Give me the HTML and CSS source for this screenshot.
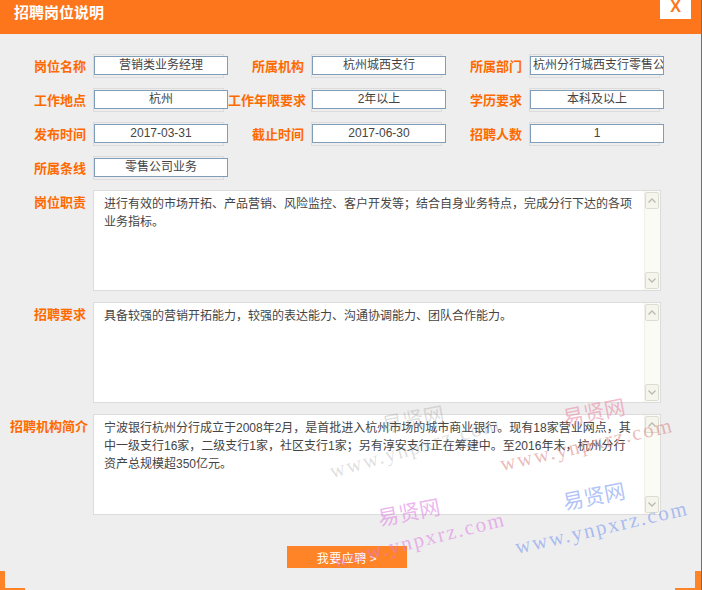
FILE: index.html
```html
<!DOCTYPE html>
<html lang="zh-CN">
<head>
<meta charset="utf-8">
<title>招聘岗位说明</title>
<link rel="stylesheet" href="styles.css">
</head>
<body>
<div class="dialog">
  <div class="header">
    <h1 class="title">招聘岗位说明</h1>
    <a class="close">X</a>
  </div>
  <div class="form">
    <div class="row">
      <div class="field"><span class="label">岗位名称</span><div class="cell"><div class="box">营销类业务经理</div></div></div>
      <div class="field"><span class="label">所属机构</span><div class="cell"><div class="box">杭州城西支行</div></div></div>
      <div class="field"><span class="label">所属部门</span><div class="cell"><div class="box box-left">杭州分行城西支行零售公司业务部</div></div></div>
    </div>
    <div class="row">
      <div class="field"><span class="label">工作地点</span><div class="cell"><div class="box">杭州</div></div></div>
      <div class="field"><span class="label">工作年限要求</span><div class="cell"><div class="box">2年以上</div></div></div>
      <div class="field"><span class="label">学历要求</span><div class="cell"><div class="box">本科及以上</div></div></div>
    </div>
    <div class="row">
      <div class="field"><span class="label">发布时间</span><div class="cell"><div class="box">2017-03-31</div></div></div>
      <div class="field"><span class="label">截止时间</span><div class="cell"><div class="box">2017-06-30</div></div></div>
      <div class="field"><span class="label">招聘人数</span><div class="cell"><div class="box">1</div></div></div>
    </div>
    <div class="row">
      <div class="field"><span class="label">所属条线</span><div class="cell"><div class="box">零售公司业务</div></div></div>
    </div>
    <div class="area-row">
      <span class="label">岗位职责</span>
      <div class="area">
        <div class="area-text">进行有效的市场开拓、产品营销、风险监控、客户开发等；结合自身业务特点，完成分行下达的各项<br>业务指标。</div>
        <div class="scroll">
          <span class="sbtn"><svg width="8" height="5" viewBox="0 0 8 5"><polyline points="0.5,4.5 4,1 7.5,4.5" fill="none" stroke="#b9b9b0" stroke-width="1.3"/></svg></span>
          <span class="sbtn"><svg width="8" height="5" viewBox="0 0 8 5"><polyline points="0.5,0.5 4,4 7.5,0.5" fill="none" stroke="#b9b9b0" stroke-width="1.3"/></svg></span>
        </div>
      </div>
    </div>
    <div class="area-row">
      <span class="label">招聘要求</span>
      <div class="area">
        <div class="area-text">具备较强的营销开拓能力，较强的表达能力、沟通协调能力、团队合作能力。</div>
        <div class="scroll">
          <span class="sbtn"><svg width="8" height="5" viewBox="0 0 8 5"><polyline points="0.5,4.5 4,1 7.5,4.5" fill="none" stroke="#b9b9b0" stroke-width="1.3"/></svg></span>
          <span class="sbtn"><svg width="8" height="5" viewBox="0 0 8 5"><polyline points="0.5,0.5 4,4 7.5,0.5" fill="none" stroke="#b9b9b0" stroke-width="1.3"/></svg></span>
        </div>
      </div>
    </div>
    <div class="area-row">
      <span class="label">招聘机构简介</span>
      <div class="area">
        <div class="area-text">宁波银行杭州分行成立于2008年2月，是首批进入杭州市场的城市商业银行。现有18家营业网点，其<br>中一级支行16家，二级支行1家，社区支行1家；另有淳安支行正在筹建中。至2016年末，杭州分行<br>资产总规模超350亿元。</div>
        <div class="scroll">
          <span class="sbtn"><svg width="8" height="5" viewBox="0 0 8 5"><polyline points="0.5,4.5 4,1 7.5,4.5" fill="none" stroke="#b9b9b0" stroke-width="1.3"/></svg></span>
          <span class="sbtn"><svg width="8" height="5" viewBox="0 0 8 5"><polyline points="0.5,0.5 4,4 7.5,0.5" fill="none" stroke="#b9b9b0" stroke-width="1.3"/></svg></span>
        </div>
      </div>
    </div>
  </div>
  <div class="actions">
    <button class="apply">我要应聘 &gt;</button>
  </div>
  <span class="corner corner-left"></span>
  <span class="corner corner-right"></span>

  <span class="wm wm-cn wm-pink wm1">易贤网</span>
  <span class="wm wm-url wm-rose wm2">www.ynpxrz.com</span>
  <span class="wm wm-url wm-gray wm3">www.ynpxrz.com</span>
  <span class="wm wm-cn wm-gray wm3b">易贤网</span>
  <span class="wm wm-cn wm-magenta wm4">易贤网</span>
  <span class="wm wm-cn wm-blue wm5">易贤网</span>
  <span class="wm wm-url wm-blue wm6">www.ynpxrz.com</span>
  <span class="wm wm-url wm-magenta wm7">www.ynpxrz.com</span>
</div>
</body>
</html>
```
FILE: styles.css
```css
body {
  margin: 0;
  background: #eeeeee;
}

.dialog {
  position: relative;
  width: 701px;
  height: 590px;
  background: #eeeeee;
  border-right: 1px solid #707070;
  overflow: hidden;
  font-family: "Liberation Sans", "Noto Sans CJK SC", sans-serif;
  font-size: 12px;
  color: #444444;
}

.header {
  position: relative;
  height: 34px;
  background: #fd761b;
}

.title {
  margin: 0;
  padding-left: 14px;
  line-height: 24px;
  font-family: "Noto Sans CJK SC", sans-serif;
  font-size: 15px;
  font-weight: bold;
  color: #ffffff;
}

.close {
  position: absolute;
  top: 0;
  right: 10px;
  width: 31px;
  height: 19px;
  background: #ffffff;
  color: #fd761b;
  font: bold 16px/13px "Liberation Sans", sans-serif;
  text-align: center;
}

.form {
  display: flex;
  flex-direction: column;
  gap: 10px;
  padding: 20px 0 0 10px;
}

.row {
  display: flex;
  align-items: center;
  height: 24px;
}

.field {
  display: flex;
  align-items: center;
}

.label {
  flex: none;
  width: 76px;
  margin-right: 7px;
  text-align: right;
  white-space: nowrap;
  color: #ff6a00;
  font-family: "Noto Sans CJK SC", sans-serif;
  font-weight: bold;
  font-size: 13px;
  line-height: 18px;
}

.cell {
  box-sizing: border-box;
  width: 131px;
  height: 24px;
  margin-right: 4px;
  padding-top: 1px;
  border: 1px solid #dcdcdc;
}

.box {
  box-sizing: border-box;
  width: 134px;
  height: 19px;
  border: 1px solid #7f9db9;
  background: #ffffff;
  text-align: center;
  line-height: 17px;
  white-space: nowrap;
  overflow: hidden;
}

.box-left {
  text-align: left;
  padding-left: 2px;
}

.area-row {
  display: flex;
  align-items: flex-start;
}

.area-row + .area-row {
  margin-top: 1px;
}

.area-row .label {
  padding-top: 3px;
}

.area {
  box-sizing: border-box;
  display: flex;
  width: 568px;
  height: 101px;
  border: 1px solid #dcdcdc;
  background: #ffffff;
}

.area-text {
  flex: 1;
  padding: 4px 6px 0 10px;
  line-height: 18px;
  white-space: nowrap;
  overflow: hidden;
}

.scroll {
  box-sizing: border-box;
  display: flex;
  flex-direction: column;
  justify-content: space-between;
  width: 16px;
  padding: 1px 0;
  background: #fbfbf6;
  border-left: 1px solid #f0f0e6;
}

.sbtn {
  display: flex;
  align-items: center;
  justify-content: center;
  height: 15px;
  margin: 0 1px 0 0;
  border: 1px solid #dcdcd0;
  border-radius: 2px;
  background: #f5f5ee;
}

.actions {
  display: flex;
  justify-content: center;
  margin-top: 31px;
  padding-right: 7px;
}

.apply {
  width: 120px;
  height: 22px;
  padding: 0;
  border: 0;
  background: #ff8427;
  color: #ffffff;
  font-family: "Noto Sans CJK SC", sans-serif;
  font-size: 12px;
  letter-spacing: 0.5px;
}

.corner {
  position: absolute;
  bottom: 0;
  width: 20px;
  height: 17px;
  border-bottom: 2px solid #ff8427;
}

.corner-left {
  left: 0;
  border-left: 5px solid #ff8427;
}

.corner-right {
  right: 0;
  border-right: 6px solid #ff8427;
}

/* watermark overlay */
.wm {
  position: absolute;
  line-height: 22px;
  white-space: nowrap;
  transform-origin: left bottom;
  pointer-events: none;
}

.wm-cn {
  font-family: "Noto Sans CJK SC", sans-serif;
  font-size: 21px;
  transform: rotate(-11deg);
}

.wm-url {
  font-family: "Liberation Serif", serif;
  font-size: 21px;
  letter-spacing: 2px;
  transform: rotate(-13deg);
}

.wm-pink { color: rgba(232, 130, 160, 0.55); }
.wm-rose { color: rgba(214, 120, 120, 0.5); }
.wm-gray { color: rgba(140, 140, 140, 0.28); }
.wm-magenta { color: rgba(222, 120, 228, 0.55); }
.wm-blue { color: rgba(100, 135, 240, 0.5); }

.wm1 { left: 565px; top: 406px; }
.wm2 { left: 503px; top: 453px; }
.wm3 { left: 333px; top: 460px; transform: rotate(-16deg); }
.wm3b { left: 384px; top: 413px; }
.wm4 { left: 380px; top: 506px; }
.wm5 { left: 565px; top: 490px; }
.wm6 { left: 518px; top: 536px; }
.wm7 { left: 336px; top: 550px; transform: rotate(-14deg); }
```
